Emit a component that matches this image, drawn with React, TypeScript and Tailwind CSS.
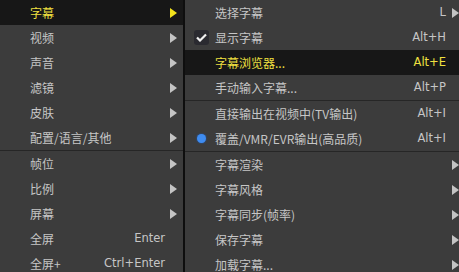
import React from 'react';

type Item =
  | { sep: true }
  | {
      sep?: false;
      label: string;
      key?: string;
      arrow?: boolean;
      active?: boolean;
      mark?: 'check' | 'radio';
    };

const leftItems: Item[] = [
  { label: '字幕', arrow: true, active: true },
  { label: '视频', arrow: true },
  { label: '声音', arrow: true },
  { label: '滤镜', arrow: true },
  { label: '皮肤', arrow: true },
  { label: '配置/语言/其他', arrow: true },
  { sep: true },
  { label: '帧位', arrow: true },
  { label: '比例', arrow: true },
  { label: '屏幕', arrow: true },
  { label: '全屏', key: 'Enter' },
  { label: '全屏+', key: 'Ctrl+Enter' },
];

const rightItems: Item[] = [
  { label: '选择字幕', key: 'L', arrow: true },
  { label: '显示字幕', key: 'Alt+H', mark: 'check' },
  { label: '字幕浏览器...', key: 'Alt+E', active: true },
  { label: '手动输入字幕...', key: 'Alt+P' },
  { sep: true },
  { label: '直接输出在视频中(TV输出)', key: 'Alt+I' },
  { label: '覆盖/VMR/EVR输出(高品质)', key: 'Alt+I', mark: 'radio' },
  { sep: true },
  { label: '字幕渲染', arrow: true },
  { label: '字幕风格', arrow: true },
  { label: '字幕同步(帧率)', arrow: true },
  { label: '保存字幕', arrow: true },
  { label: '加载字幕...', arrow: true },
];

function Arrow({ active }: { active?: boolean }) {
  return (
    <svg width="7" height="10" viewBox="0 0 7 10" className="shrink-0">
      <path d="M0 0 L7 5 L0 10 Z" fill={active ? '#f2e21c' : '#c4c4c4'} />
    </svg>
  );
}

function Mark({ type }: { type?: 'check' | 'radio' }) {
  if (type === 'check')
    return (
      <div className="flex h-[15px] w-[15px] items-center justify-center rounded-[3px] bg-[#2a2a30]">
        <svg width="11" height="9" viewBox="0 0 11 9">
          <path d="M1 4.5 L4 7.5 L10 1.5" stroke="#f0f0f0" strokeWidth="2.2" fill="none" />
        </svg>
      </div>
    );
  if (type === 'radio')
    return <div className="h-[9px] w-[9px] rounded-full bg-[#3f8cf0] shadow-[0_0_2px_#1e5fc0]" />;
  return null;
}

function Menu({ items, width, side }: { items: Item[]; width?: string; side: 'left' | 'right' }) {
  return (
    <div className={`flex flex-col bg-[#3c3c3c] ${width ?? 'flex-1'}`}>
      {items.map((it, i) =>
        it.sep ? (
          <div key={i} className="flex h-[7px] items-center">
            <div className="h-px w-full bg-[#262626]" />
          </div>
        ) : (
          <div
            key={i}
            className={`flex h-[25px] shrink-0 items-center ${it.active ? 'bg-[#171717] text-[#f0e040]' : 'text-[#c6c6c6]'}`}
          >
            <div className={`flex shrink-0 items-center justify-center ${side === 'left' ? 'w-[30px]' : 'w-[30px] pl-[2px]'}`}>
              <Mark type={it.mark} />
            </div>
            <span className="flex-1 whitespace-nowrap text-[12px]">{it.label}</span>
            {it.key && (
              <span className="whitespace-nowrap font-['DejaVu_Sans',sans-serif] text-[11.5px]">{it.key}</span>
            )}
            <div className={`flex items-center justify-end ${side === 'left' ? 'w-[18px] pr-[6px]' : 'w-[13px] pr-0'}`}>
              {it.arrow && <Arrow active={it.active} />}
            </div>
          </div>
        )
      )}
    </div>
  );
}

export default function App() {
  return (
    <div className="flex h-[272px] w-[459px] overflow-hidden bg-[#3c3c3c] font-['Noto_Sans_CJK_SC',sans-serif]">
      <Menu items={leftItems} width="w-[183px] shrink-0" side="left" />
      <div className="w-[2px] shrink-0 bg-[#0e0e0e]" />
      <Menu items={rightItems} side="right" />
    </div>
  );
}
